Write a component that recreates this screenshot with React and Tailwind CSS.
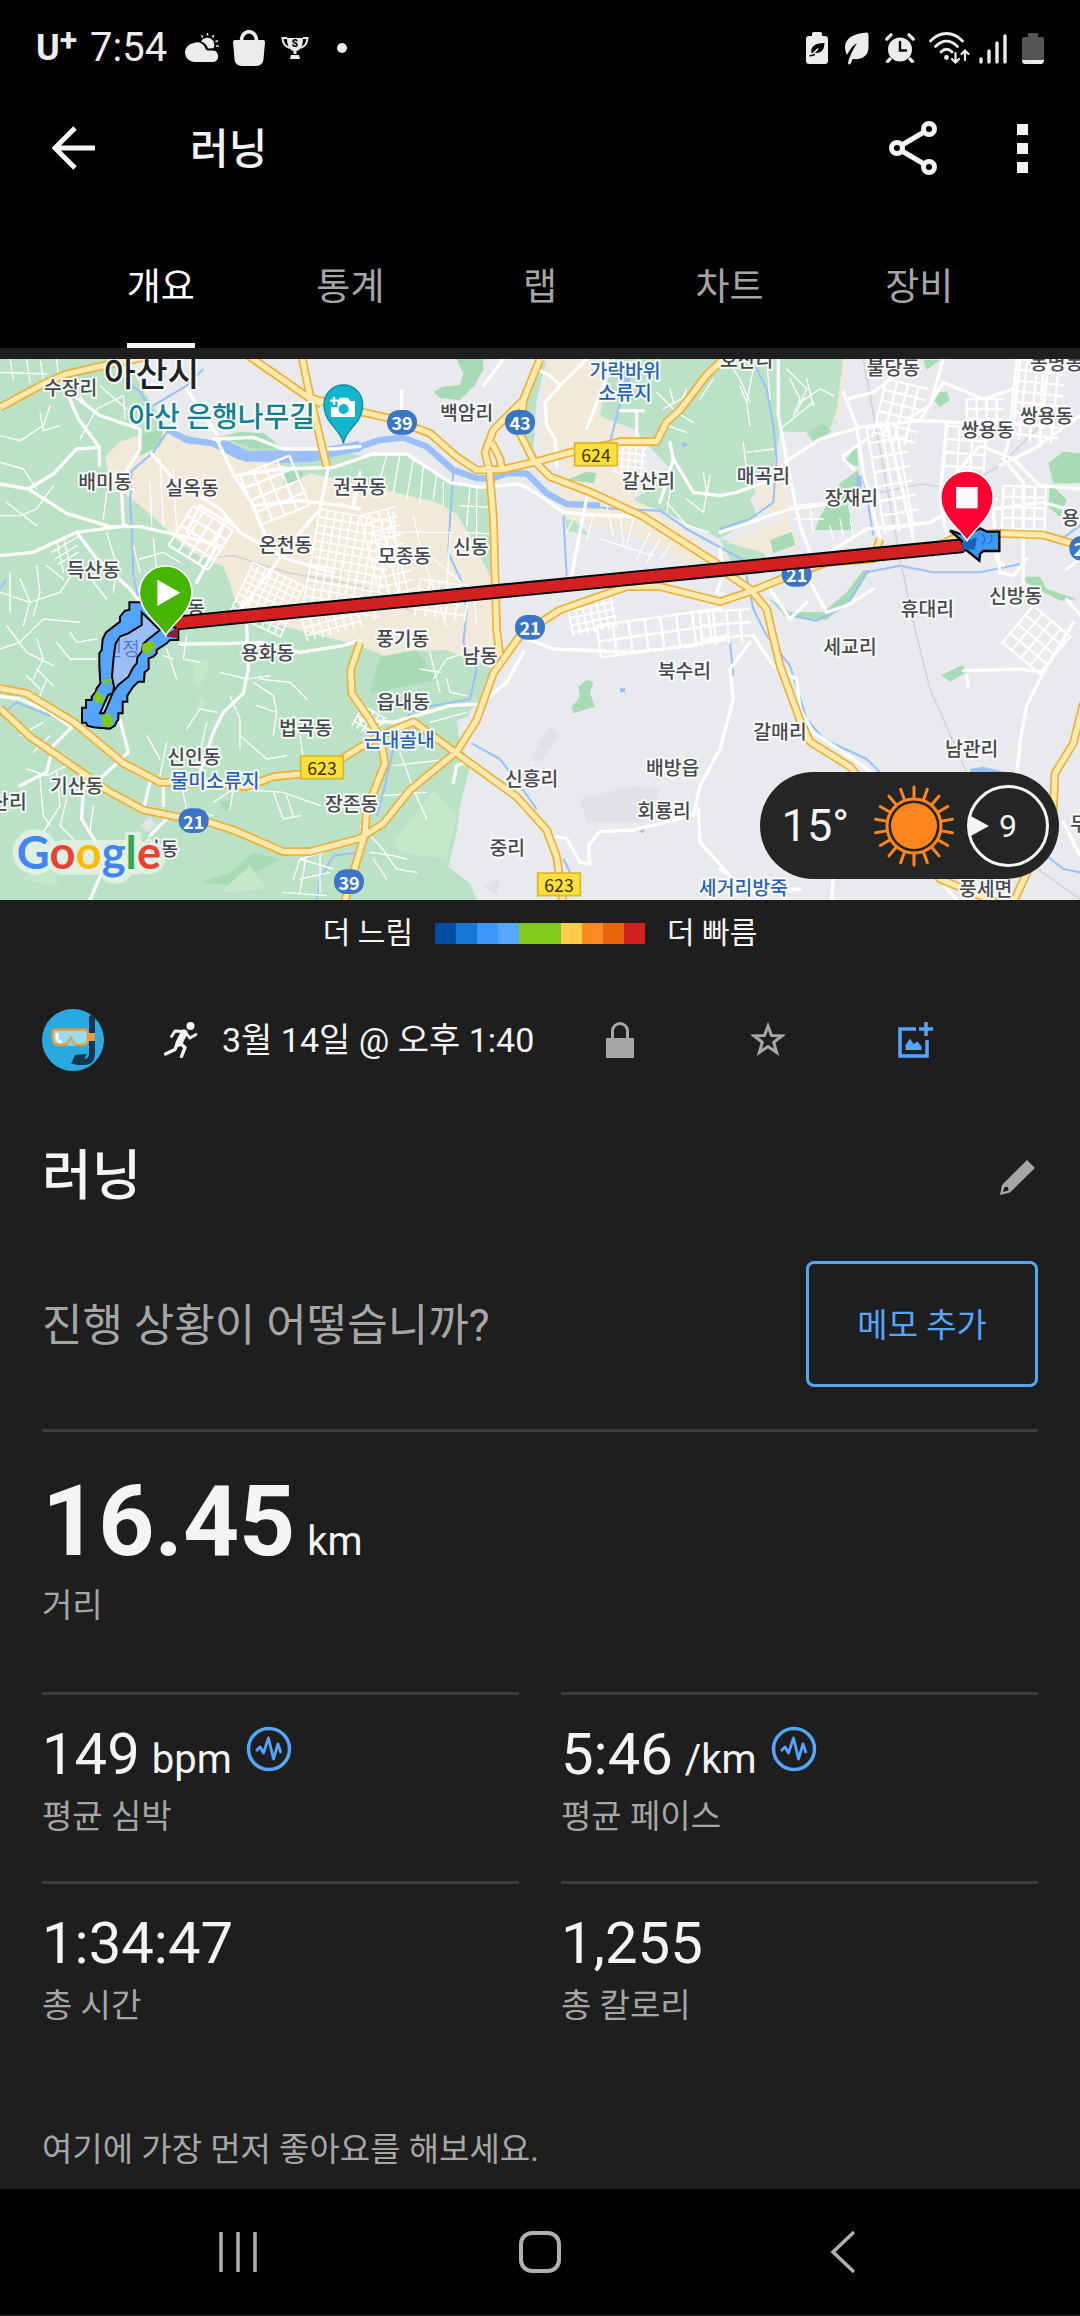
import React, { useState } from "react";

const tabs = ["개요", "통계", "랩", "차트", "장비"];

const speedColors = [
  "bg-[#004c9e]",
  "bg-[#1976d2]",
  "bg-[#3d97f5]",
  "bg-[#56a8ff]",
  "bg-[#82c91e]",
  "bg-[#82c91e]",
  "bg-[#fbcb4a]",
  "bg-[#fa8a24]",
  "bg-[#e8650a]",
  "bg-[#d32020]",
];

const stats = [
  { value: "149", unit: "bpm", label: "평균 심박", chart: true },
  { value: "5:46", unit: "/km", label: "평균 페이스", chart: true },
  { value: "1:34:47", label: "총 시간" },
  { value: "1,255", label: "총 칼로리" },
];

// map units are a third of a pixel at full width: 3240 x 1623
const places = [
  ["수장리", 212, 83],
  ["배미동", 315, 366],
  ["실옥동", 576, 385],
  ["온천동", 857, 556],
  ["득산동", 280, 629],
  ["방축동", 535, 743],
  ["권곡동", 1079, 381],
  ["백암리", 1400, 158],
  ["갈산리", 1945, 363],
  ["신동", 1412, 561],
  ["모종동", 1214, 588],
  ["호산리", 2240, 0],
  ["불당동", 2680, 25],
  ["봉명동", 3170, 8],
  ["쌍용동", 2963, 211],
  ["쌍용동", 3140, 168],
  ["매곡리", 2290, 348],
  ["장재리", 2554, 413],
  ["용곡동", 3265, 473],
  ["신방동", 3047, 708],
  ["휴대리", 2782, 748],
  ["용화동", 803, 878],
  ["법곡동", 917, 1105],
  ["신인동", 582, 1191],
  ["기산동", 230, 1278],
  ["오산리", 0, 1326],
  ["장존동", 1055, 1333],
  ["초사동", 455, 1468],
  ["풍기동", 1208, 838],
  ["남동", 1440, 888],
  ["읍내동", 1210, 1026],
  ["신흥리", 1595, 1258],
  ["중리", 1522, 1463],
  ["배방읍", 2018, 1223],
  ["회룡리", 1992, 1353],
  ["북수리", 2053, 933],
  ["세교리", 2550, 861],
  ["갈매리", 2340, 1116],
  ["남관리", 2915, 1168],
  ["풍세면", 2957, 1588],
  ["두남리", 3290, 1393],
];

const waterPlaces = [
  ["가락바위", 1875, 33],
  ["소류지", 1875, 100],
  ["물미소류지", 645, 1263],
  ["근대골내", 1198, 1141],
  ["세거리방죽", 2230, 1585],
];

const routes = [
  ["39", 1206, 190],
  ["43", 1560, 190],
  ["21", 1590, 805],
  ["21", 2390, 646],
  ["21", 581, 1385],
  ["39", 1047, 1568],
  ["21", 3253, 568],
];

const localRoutes = [
  ["624", 1788, 286],
  ["623", 966, 1225],
  ["623", 1677, 1576],
];

const highways = [
  "M0 145 130 75 200 45 310 20 430 -5",
  "M745 -10 925 115 965 135",
  "M905 -10 930 110 980 322",
  "M925 115 1080 158 1170 178 1290 223 1370 293 1430 333 1510 331 1610 308 1700 283 1830 256 1860 248 1970 248 2000 188 2040 153 2120 48 2170 0",
  "M1620 0 1570 123 1480 213 1455 280 1468 333 1480 473 1490 813 1500 890",
  "M1475 250 1500 300 1505 330",
  "M1570 123 1560 223 1600 303 1650 353 1780 403 1930 473 2150 613 2190 650 2250 690 2300 750 2340 920 2400 1083 2430 1148 2550 1223 2650 1350 2820 1560 2900 1593 3010 1640",
  "M1080 1438 1150 1393 1230 1293 1370 1178 1430 1083 1480 943 1560 830 1680 753 1880 683 1980 683 2160 728 2250 698 2350 658 2480 610 2620 600 2640 540",
  "M2780 580 2860 538 2990 523 3130 528 3240 560",
  "M0 1048 90 1133 250 1243 320 1293 430 1353 530 1373 620 1388 700 1413 850 1478 930 1478 1080 1438",
  "M0 988 80 1003 220 1088 370 1213 410 1233 480 1270 620 1273 740 1283 820 1253 960 1240 1080 1165 1140 1130 1240 1088 1370 1183 1550 1313 1640 1413 1670 1493 1690 1640",
  "M1080 850 1052 933 1055 1003 1110 1083 1140 1133 1155 1213 1100 1353 1095 1423 1060 1543 1030 1640",
  "M3250 1033 3220 1153 3165 1243 3160 1350 3080 1543 3035 1640",
];

const streets = [
  "M205 110 235 180 298 265 298 320",
  "M195 90 300 170 420 210 420 270 380 335",
  "M0 375 85 390 200 463 330 503 420 503 540 530 660 560",
  "M0 590 100 580 230 520 380 500",
  "M365 395 370 495",
  "M298 265 230 270 160 345 85 390",
  "M455 285 530 370 660 450 720 520 860 600 1000 640",
  "M650 240 700 345 760 440 800 540",
  "M640 240 760 235 850 270 1000 270 1080 262",
  "M700 350 840 330 1000 325 1120 285 1220 285 1350 370 1440 385 1560 375 1620 410 1690 460 1780 468 1920 473 2010 530",
  "M1760 210 1840 5",
  "M1910 160 1910 240M1860 155 1930 155",
  "M1765 390 1715 650",
  "M1450 80 1510 0",
  "M1610 30 1650 50 1680 80 1635 130 1640 200 1665 240 1670 320M1680 80 1760 0",
  "M1205 95 1205 150",
  "M560 90 650 225",
  "M985 325 960 450M1080 340 1060 440",
  "M760 440 900 425 1030 440 1080 450",
  "M560 520 600 440 700 500M640 560 680 480",
  "M700 780 900 520 960 450",
  "M590 670 650 560",
  "M230 520 290 600 390 690 420 730",
  "M540 855 700 853 780 850 900 880 1030 860 1080 845",
  "M740 800 745 930 730 1003 670 1060 640 1120 600 1240",
  "M360 1083 385 1180 300 1260 250 1290 245 1380 300 1470 310 1530 270 1623",
  "M0 1012 60 1020 150 1060 215 1105 160 1160 140 1240 60 1280",
  "M430 1353 450 1270M490 1273 490 1340M450 1430 500 1380",
  "M1080 1083 1180 1090 1350 1040 1440 1035 1520 970 1570 880",
  "M1360 1270 1370 1220 1400 1208",
  "M1660 1433 1700 1438 1740 1510 1770 1515 1765 1460 1800 1418 1900 1413 2080 1370 2100 1280 2160 1170 2200 1020 2190 930 2250 850",
  "M2095 1350 2100 1450 2190 1550",
  "M2260 830 2320 920 2390 960 2400 1050 2440 1120 2560 1200 2640 1260",
  "M2890 935 3060 930 3130 940M2900 950 2905 985",
  "M3220 790 3130 940 3080 1040 3060 1150 3050 1250",
  "M3190 1390 3240 1490M2160 1530 2260 1600 2400 1590M2500 1550 2495 1623",
  "M2800 1540 2870 1623",
  "M2160 410 2210 400 2290 370",
  "M2335 0 2335 170 2365 330 2400 500 2440 610",
  "M2355 310 2460 240 2580 205 2760 185 2880 190 3040 195 3120 200",
  "M2160 520 2370 450 2530 430",
  "M2530 100 2570 200 2590 340 2640 540",
  "M2540 120 2620 100 2700 40 2720 -10",
  "M2660 190 2700 360 2740 540M2720 180 2790 140 2830 0",
  "M2840 190 2830 300 2820 420 2840 530",
  "M2760 185 2830 70 2950 120 3040 90",
  "M2870 340 2940 260 3040 300 3120 380 3240 390",
  "M3060 0 3040 200 3010 300 3070 370 3070 700",
  "M3130 0 3120 260 3000 320",
  "M3240 170 3100 270",
  "M2990 560 3000 640 3040 650 3080 600",
  "M3010 620 2990 600 2980 450 3130 430 3200 450",
  "M2440 610 2600 510 2790 490 2860 450 2990 420",
  "M2530 290 2600 240M2560 330 2530 300",
  "M2180 710 2150 700 2170 650 2160 570M2420 650 2480 760 2540 740 2620 690",
  "M2310 690 2370 780 2420 730",
  "M1560 830 1660 870 1900 880 2080 860 2180 830",
  "M3250 780 3200 720M3200 630 3240 600",
  "M2010 250 2020 300 1980 430",
  "M2020 300 2080 400 2160 410",
];

const lanes = [
  "M0 40 140 45M30 0 40 60M80 0 90 70M120 0 130 60M170 0 175 50",
  "M0 230 60 245 130 200 150 140M120 160 130 215 180 200",
  "M0 310 70 330 110 390M160 380 110 450 60 470 0 470M110 500 20 430",
  "M155 580 240 530M165 600 230 560M175 615 235 580M170 545 190 640M190 535 215 640",
  "M60 660 90 730 70 800M110 620 120 700 100 770M30 640 30 760M140 620 190 660",
  "M240 240 290 150 370 110M370 110 375 180M240 110 260 140M300 80 380 150",
  "M310 480 320 400 400 390M450 370 455 500M480 300 490 500M520 330 530 520",
  "M420 600 490 580 540 610M400 560 420 640M460 540 470 640M250 630 320 720",
  "M0 700 90 730 180 700 220 640M320 520 350 620 340 700",
  "M0 870 60 850 130 780 240 790M20 800 80 880 160 920M100 960 130 900 110 840",
  "M140 960 120 1010M110 930 160 980M80 950 120 990",
  "M170 850 210 900 290 900M210 820 230 850 290 840",
  "M500 870 530 960M490 890 520 900M560 830 550 900 600 910",
  "M660 940 740 960 810 950M760 970 820 1010 830 1060M780 960 870 970 920 1020",
  "M650 1060 600 1050 560 1110M690 1010 720 1080 720 1170M620 1090 600 1180 520 1200",
  "M720 1130 800 1200 860 1190M820 1130 830 1060 770 1040M900 1130 910 1200",
  "M640 1330 700 1290 850 1300 960 1340M820 1300 850 1380 900 1370M860 1310 880 1370",
  "M700 1290 690 1350M540 1260 560 1350 640 1370M500 1150 480 1250M440 1130 480 1200",
  "M80 1230 140 1250 200 1220M60 1130 130 1090M100 1180 150 1130M120 1260 130 1370 150 1400",
  "M170 1240 180 1340 130 1420M200 1320 180 1400 220 1440M280 1340 270 1420",
  "M880 1560 900 1500 970 1480M900 1500 1000 1530M920 1480 900 1600M960 1470 960 1600M850 1600 980 1610M990 1540 900 1560",
  "M1110 1480 1180 1490 1220 1500M1080 1400 1140 1460 1190 1530 1250 1540M1120 1500 1160 1560",
  "M1290 880 1320 1000M1260 930 1320 940M1340 960 1350 1000 1400 1010M1300 960 1340 900 1400 880",
  "M1200 1180 1240 1290 1280 1380M1150 1310 1280 1300M1180 1220 1350 1200M1290 1090 1400 1060",
  "M1140 360 1160 290M1180 400 1200 285M1220 420 1240 300M1260 430 1270 320M1300 420 1310 350M1330 440 1330 370M1400 500 1410 380M1430 560 1430 380M1380 440 1480 445M1390 520 1480 525",
  "M1240 470 1270 600 1340 800M1180 460 1200 700M1120 520 1360 520M1350 520 1340 700M1300 600 1420 700 1430 790",
  "M2060 90 2040 140M1970 100 2030 160 2080 190M1990 150 2060 110M2010 90 2020 130M2000 200 2060 220",
  "M2100 120 2140 60M2130 350 2110 460 2060 420M2000 430 2060 500 2130 520M2020 340 2000 460M2110 340 2120 400",
  "M1820 440 1840 530M1860 470 1870 560M1900 480 1880 560M1780 470 1760 540M1720 480 1700 520M1800 540 1960 590M1950 520 1910 600M1980 540 1940 610M2010 560 1980 600",
  "M2220 80 2240 130 2250 200M2180 0 2220 60 2250 130M2260 30 2240 130M2300 0 2310 120M2360 30 2420 90 2390 160",
  "M2400 130 2460 90 2500 110M2420 60 2440 140M2340 210 2440 130M2380 170 2400 120 2370 60",
  "M2240 280 2320 270M2230 250 2240 340 2270 380M2250 330 2330 330",
  "M2370 440 2480 430M2380 480 2470 480M2430 440 2440 520",
  "M2490 500 2500 540M2520 480 2530 530M2550 480 2560 530",
];

const rivers = [
  "M505 213 560 243 640 253 720 293 850 303 940 298 1080 263 1140 243 1210 236 1280 263 1360 333 1430 358 1480 358 1520 343 1580 343 1640 403 1700 435 1800 440",
];

const streams = [
  "M505 213 460 160 420 100 370 60M460 140 560 80 610 30M505 213 460 280 395 335 390 430 395 500 400 650 420 740",
  "M1360 340 1350 480 1345 580 1390 680 1400 760 1390 850 1430 930 1410 1020 1300 1040 1230 1060 1180 1170 1150 1300 1130 1370",
  "M1700 435 1850 450 1980 455 2060 510 2170 570 2260 620",
  "M1690 470 1700 650",
  "M1860 0 1880 60 1830 250",
  "M2265 20 2300 90 2320 200 2330 300 2320 430 2250 480 2160 510",
  "M2590 350 2620 530",
  "M2240 650 2260 750 2300 830 2370 920 2420 1080 2470 1140 2600 1200 2640 1240",
  "M2350 765 2450 785 2540 740 2600 640 2700 620 2800 640 2940 640 3060 615",
  "M3240 500 3170 550",
  "M1415 1153 1500 1200 1560 1280 1610 1350",
  "M1690 1500 1710 1540",
  "M1000 1490 960 1560 950 1623M1000 1490 1080 1480",
  "M3140 1490 3190 1530 3240 1540",
  "M2190 850 2200 950",
  "M0 1070 50 1030 150 1070",
  "M0 690 20 660",
];

const rails = [
  "M2590 0 2640 270 2700 600 2745 810 2790 990 2900 1240 3100 1520 3240 1620",
  "M80 900 300 700 500 610 700 590 860 640 1080 680 1240 760",
  "M2640 400 2760 375 2880 390 3000 320 3120 200",
];

// a block of parallel streets in both directions
function Blocks({ x, y, w, h, step, angle, width = 7 }) {
  let d = "";
  for (let i = 0; i <= w; i += step) d += `M${i} 0V${h}`;
  for (let j = 0; j <= h; j += step) d += `M0 ${j}H${w}`;
  return (
    <path
      d={d}
      transform={`translate(${x} ${y}) rotate(${angle})`}
      stroke="#fff"
      strokeWidth={width}
      fill="none"
    />
  );
}

function MapLabel({ text, x, y, size = 58, color = "#45494e" }) {
  return (
    <text
      x={x}
      y={y}
      fontSize={size}
      fill={color}
      stroke="#fff"
      strokeOpacity="0.85"
      strokeWidth="12"
      strokeLinejoin="round"
      paintOrder="stroke"
      fontWeight="500"
      textAnchor="middle"
      dominantBaseline="central"
    >
      {text}
    </text>
  );
}

function RouteMap() {
  return (
    <svg
      viewBox="0 0 3240 1623"
      className="block w-full font-['Noto_Sans_CJK_KR',sans-serif]"
      role="img"
      aria-label="지도"
    >
      <rect width="3240" height="1623" fill="#e8eaed" />

      {/* woods and fields */}
      <g fill="#bbe2c6">
        <path d="M0 0H375L430 93 505 213 640 250 760 238 850 270 1000 270 1080 290 1220 285 1360 370 1480 385 1490 800 1480 930 1440 1033 1410 1053 1405 1073 1370 1083 1380 1153 1410 1223 1380 1343 1370 1423 1345 1523 1410 1573 1430 1623H0Z" />
        <path d="M1640 0 1610 120 1600 270 1640 350 1560 200 1590 60Z" />
        <path d="M1820 0 1800 173 1910 213 1930 243 2020 340 1900 423 2020 473 2160 540 2270 470 2250 420 2320 330 2340 218H2480L2510 193 2530 0Z" />
        <path d="M1690 453 1770 530 1700 515Z" />
        <path d="M2160 540 2300 570 2280 640 2200 620Z" />
      </g>

      {/* built-up land */}
      <g fill="#f1eada">
        <path d="M315 293 360 248 420 228 490 208 640 263 700 295 860 320 850 385 930 343 1080 375 1310 430 1370 465 1410 530 1430 575 1475 660 1485 930 1340 873 1210 878 1180 903 1080 860 800 790 740 773 700 713 690 673 670 623 600 593 530 543 460 473 400 423 330 373Z" />
        <path d="M1640 0H1830L1800 170 1920 230 1900 420 2010 480 2180 620 2060 610 1880 520 1700 480 1670 410 1700 340 1620 260Z" />
        <path d="M2530 0H2540L2520 170 2490 215 2510 150Z" />
        <path d="M2260 380 2350 300 2370 480 2280 450Z" />
        <path d="M2180 550 2360 480 2400 570 2300 585Z" />
      </g>

      <path
        fill="#e8eaed"
        d="M1480 385 1640 420 1690 470 1700 520 1880 560 1960 620 1490 670Z"
      />

      {/* parks */}
      <g fill="#a8dab5">
        <path d="M1370 0H1450L1450 33 1420 83 1380 123 1320 118 1300 98 1330 83 1380 78 1390 43Z" />
        <path d="M660 233 720 218 790 223 850 268 760 268Z" />
        <path d="M420 228 490 208 480 260 420 290Z" />
        <path d="M850 333 910 338 900 370 850 385Z" />
        <path d="M1700 363 1760 338 1790 343 1780 373Z" />
        <path d="M1140 893 1250 873 1310 963 1110 1003Z" />
        <path d="M1760 963 1780 968 1770 1003 1785 1043 1720 1063 1715 1043 1740 1013 1735 983Z" />
        <path d="M2420 223 2470 193 2495 218 2440 248Z" />
        <path d="M2530 313 2570 258 2575 323 2550 313Z" />
        <path d="M2460 473 2520 373 2575 333 2580 373 2540 423 2560 513 2445 513Z" />
        <path d="M2310 543 2375 518 2385 558 2320 583Z" />
        <path d="M2770 3H2820L2780 33ZM2805 98H2840L2850 123 2820 143 2800 123Z" />
        <path d="M3145 313 3190 278 3240 283V373H3160ZM3150 373 3200 423 3180 473 3145 443Z" />
        <path d="M2300 713 2360 773 2480 783 2560 713 2610 633 2590 633 2540 700 2470 760 2370 760Z" />
        <path d="M3070 653H3120L3140 690 3230 720 3180 725 3080 673Z" />
        <path d="M2823 948 2890 918 2895 943 2850 968Z" />
        <path d="M690 1543 760 1480 840 1500 700 1580 600 1570ZM660 1330 700 1320 680 1360Z" />
      </g>
      <g fill="#c5e8cb">
        <path d="M580 900 630 910 600 980 580 970ZM600 1010 620 1030 590 1060Z" />
        <path d="M1180 1450 1300 1290 1370 1370 1340 1500 1200 1480Z" />
        <path d="M660 1600 750 1520 800 1590ZM60 1560 150 1520 180 1580Z" />
      </g>
      <path
        fill="#e0e2e6"
        d="M1590 1200 1650 1100 1680 1130 1620 1210ZM1740 1320 1900 1280 1980 1290 1940 1390 1760 1390ZM1450 1580 1500 1560 1490 1610ZM420 1400 450 1370 470 1400 440 1420Z"
      />

      <g fill="none" stroke="#9bbff9" strokeLinejoin="round">
        {rivers.map((d) => (
          <path key={d} d={d} strokeWidth="19" />
        ))}
        <path d="M660 253 740 292 920 290 1080 262" strokeWidth="32" />
        {streams.map((d) => (
          <path key={d} d={d} strokeWidth="6" />
        ))}
      </g>
      <g fill="#9bbff9">
        <path d="M1870 30 1900 40 1880 90 1850 120ZM2045 250 2065 255 2050 268Z" />
        <path d="M2910 1230 2950 1223 3020 1240H2910ZM1200 1120 1215 1130 1195 1170Z" />
        <path d="M1860 988H1875V1000H1860ZM1915 1415 1935 1410 1930 1423ZM2570 350H2585V390H2570Z" />
      </g>

      <g fill="none" stroke="#d2d4d8" strokeWidth="5">
        {rails.map((d) => (
          <path key={d} d={d} />
        ))}
      </g>

      {/* small roads */}
      <g fill="none" stroke="#fff" strokeLinejoin="round" strokeLinecap="round">
        {lanes.map((d) => (
          <path key={d} d={d} strokeWidth="4" />
        ))}
        {streets.map((d) => (
          <path key={d} d={d} strokeWidth="10" />
        ))}
      </g>
      <Blocks x={960} y={450} w={230} h={300} step={24} angle={10} width={5} />
      <Blocks x={760} y={610} w={170} h={170} step={21} angle={25} width={5} />
      <Blocks x={580} y={440} w={140} h={140} step={35} angle={32} />
      <Blocks x={720} y={350} w={160} h={160} step={40} angle={-22} />
      <Blocks x={1080} y={470} w={110} h={280} step={28} angle={-14} width={5} />
      <Blocks x={900} y={760} w={170} h={90} step={24} angle={-15} width={5} />
      <Blocks x={1260} y={660} w={150} h={110} step={30} angle={8} width={5} />
      <Blocks x={1090} y={1040} w={80} h={70} step={18} angle={30} width={5} />
      <Blocks x={1850} y={260} w={90} h={80} step={20} angle={5} width={5} />
      <Blocks x={1700} y={735} w={140} h={100} step={22} angle={-12} width={6} />
      <Blocks x={1790} y={800} w={380} h={100} step={48} angle={-8} />
      <Blocks x={2100} y={760} w={150} h={100} step={40} angle={-4} />
      <Blocks x={2600} y={210} w={110} h={320} step={44} angle={-10} />
      <Blocks x={2660} y={60} w={130} h={180} step={33} angle={14} />
      <Blocks x={2840} y={200} w={120} h={130} step={40} angle={4} />
      <Blocks x={3050} y={0} w={150} h={240} step={32} angle={6} />
      <Blocks x={2900} y={120} w={110} h={70} step={30} angle={0} />
      <Blocks x={3010} y={380} w={130} h={150} step={32} angle={2} />
      <Blocks x={3100} y={740} w={150} h={150} step={36} angle={40} />

      {/* main roads: darker casing under a light fill */}
      <g fill="none" strokeLinejoin="round">
        {highways.map((d) => (
          <path key={d} d={d} stroke="#efb035" strokeWidth="26" />
        ))}
        {highways.map((d) => (
          <path key={d} d={d} stroke="#ffe9ae" strokeWidth="16" />
        ))}
      </g>

      {places.map(([text, x, y]) => (
        <MapLabel key={`${text}${x}`} text={text} x={x} y={y} />
      ))}
      {waterPlaces.map(([text, x, y]) => (
        <MapLabel key={text} text={text} x={x} y={y} color="#2763b5" />
      ))}
      <MapLabel text="아산시" x={455} y={36} size={104} color="#202124" />
      <MapLabel
        text="아산 은행나무길"
        x={665}
        y={168}
        size={84}
        color="#12808e"
      />

      {/* sight pin */}
      <path
        d="M1030 253C1020 205 972 195 972 136A58 58 0 0 1 1088 136C1088 195 1040 205 1030 253Z"
        fill="#12b5cb"
        stroke="#0b8f9f"
        strokeWidth="4"
      />
      <path
        d="M1013 126 1020 116H1044L1051 126H1065V174H993V145H1013Z"
        fill="#fff"
      />
      <path d="M1002 113V137M990 125H1014" stroke="#fff" strokeWidth="7" />
      <circle cx="1031" cy="150" r="15" fill="#12b5cb" />

      {routes.map(([text, x, y]) => (
        <g key={`${text}${x}`}>
          <rect
            x={x - 45}
            y={y - 37}
            width="90"
            height="74"
            rx="36"
            fill="#3b76c6"
          />
          <text
            x={x}
            y={y}
            fill="#fff"
            fontSize="54"
            fontWeight="700"
            textAnchor="middle"
            dominantBaseline="central"
          >
            {text}
          </text>
        </g>
      ))}
      {localRoutes.map(([text, x, y]) => (
        <g key={`${text}${x}`}>
          <rect
            x={x - 64}
            y={y - 34}
            width="128"
            height="68"
            fill="#ffdf3a"
            stroke="#d8b52c"
            strokeWidth="5"
          />
          <text
            x={x}
            y={y}
            fill="#3b3200"
            fontSize="53"
            textAnchor="middle"
            dominantBaseline="central"
          >
            {text}
          </text>
        </g>
      ))}

      {/* lake inside the track */}
      <path
        fill="#9bbff9"
        d="M425 745V798L385 823 347 853 336 953 340 998 400 925 425 878 442 843 500 813 460 770Z"
      />
      <text
        x="366"
        y="867"
        fontSize="58"
        fill="#4f7dce"
        textAnchor="middle"
        dominantBaseline="central"
      >
        신정
      </text>

      {/* pale halo under the logo */}
      <g fill="#e3f2e4" fillOpacity="0.9">
        <circle cx="106" cy="1479" r="68" />
        <rect x="140" y="1443" width="310" height="104" rx="50" />
        <circle cx="346" cy="1518" r="56" />
        <rect x="374" y="1418" width="50" height="110" rx="12" />
        <circle cx="446" cy="1496" r="50" />
      </g>
      <text
        x="50"
        y="1529"
        fontSize="136"
        fontWeight="700"
        className="font-[Lato,sans-serif]"
      >
        <tspan fill="#4285f4">G</tspan>
        <tspan fill="#ea4335">o</tspan>
        <tspan fill="#fbbc05">o</tspan>
        <tspan fill="#4285f4">g</tspan>
        <tspan fill="#34a853">l</tspan>
        <tspan fill="#ea4335">e</tspan>
      </text>

      {/* recorded track */}
      <path
        d="M500 795 2890 560"
        stroke="#000"
        strokeWidth="44"
        fill="none"
      />
      <path
        d="M500 795 2890 560"
        stroke="#d32020"
        strokeWidth="33"
        fill="none"
      />
      <path
        fill="#54a5ff"
        fillRule="evenodd"
        stroke="#000"
        strokeWidth="6"
        d="M430 730H388V753L375 755 360 773V788L330 811 318 820 308 840 305 873 298 883V920L301 973 290 988 286 1000 275 1013V1023H258V1046H246V1091H258L262 1100 280 1105 330 1109 345 1100 350 1088 355 1082V1063H368V1028H382V1010L390 998 398 985 410 973 415 968H432L434 940 446 930V898L460 893 470 883V873L500 853 510 843H535V813L500 790ZM425 760V798L385 823 360 833 347 853 341 893 336 953 342 983 340 998 355 978 385 953 400 925 410 913 412 895 425 878 430 855 442 843 480 813ZM300 1063 310 1040 325 1008 338 1002 320 1045 312 1063Z"
      />
      <g fill="#82c91e">
        <path d="M290 995 315 1015 308 1030 288 1032 280 1015Z" />
        <path d="M305 1070 325 1062 342 1080 335 1102 310 1104Z" />
        <path d="M428 855 455 845 468 862 445 888 425 875Z" />
        <path d="M308 965 335 958 334 968 312 974Z" />
      </g>
      <path
        fill="#3d97f5"
        stroke="#000"
        strokeWidth="7"
        d="M2850 515 2900 530 2940 508 2960 518H2998V576H2950L2940 585 2938 605 2900 574H2895L2885 545Z"
      />
      <path d="M2885 550 2930 535 2925 572 2890 572Z" fill="#1766b8" />
      <path
        d="M2945 525Q2965 540 2945 555M2970 525Q2985 540 2965 555"
        stroke="#1976d2"
        strokeWidth="4"
        fill="none"
      />
      <path d="M490 830 535 805 533 838Z" fill="#8d2030" />

      <path
        d="M497 830C480 795 418 760 418 700A79 79 0 0 1 576 700C576 760 514 795 497 830Z"
        fill="#45b500"
        stroke="#fff"
        strokeWidth="5"
      />
      <path d="M472 662 541 701 472 741Z" fill="#fff" />
      <path
        d="M2901 545C2880 510 2822 475 2822 415A79 79 0 0 1 2980 415C2980 475 2922 510 2901 545Z"
        fill="#ff0032"
        stroke="#fff"
        strokeWidth="5"
      />
      <rect x="2868" y="384" width="65" height="64" fill="#fafafa" />
    </svg>
  );
}

function SunIcon() {
  const rays = Array.from({ length: 18 }, (_, i) => i * 20);
  return (
    <svg viewBox="0 0 82 82" className="size-[82px]" fill="none">
      <circle cx="41" cy="41" r="23" fill="#ff861e" />
      <circle cx="41" cy="41" r="27" stroke="#ff861e" strokeWidth="3" />
      {rays.map((a) => (
        <path
          key={a}
          d="M41 13V2"
          stroke="#ff861e"
          strokeWidth="3"
          strokeLinecap="round"
          transform={`rotate(${a} 41 41)`}
        />
      ))}
    </svg>
  );
}

function Weather() {
  return (
    <div className="absolute right-[21px] bottom-[21px] flex h-[107px] items-center rounded-full bg-[#252525] pr-[10px] pl-[22px] text-[#f4f4f4]">
      <span className="text-[45px]">15°</span>
      <span className="ml-6">
        <SunIcon />
      </span>
      <div className="relative ml-3 flex size-[82px] items-center justify-center rounded-full border-3 border-[#f4f4f4]">
        <svg
          viewBox="0 0 20 22"
          className="absolute -left-px h-[22px] w-5"
          fill="#f4f4f4"
        >
          <path d="M0 0 20 11 0 22Z" />
        </svg>
        <span className="text-[32px]">9</span>
      </div>
    </div>
  );
}

function StatusBar() {
  return (
    <div className="flex items-center justify-between py-6 pr-9 pl-9 text-[#ececec]">
      <div className="flex items-center">
        <span className="flex w-[54px] items-start font-bold">
          <span className="text-[36px] leading-[48px]">U</span>
          <span className="text-[32px] leading-[32px]">+</span>
        </span>
        <span className="text-[40px] leading-[48px]">7:54</span>
        <svg
          viewBox="0 0 34 30"
          className="ml-[18px] h-[30px] w-[34px]"
          fill="currentColor"
        >
          <path d="M10 29A9.500 9.500 0 0 1 9 10C13 8 19 10 20.500 16 22 18 23 17.500 28 17.500A5.800 5.800 0 0 1 28 29Z" />
          <path d="M16 8.500A7 7 0 1 1 28.500 15.200L23 15.500C21.500 11.500 19.500 9.500 16 8.500Z" />
          <path
            d="M22.500 0V2.500M16.500 2.200 17.800 4.500M28.800 2.200 27.500 4.500M33 7.500 30.500 8.800M33.800 13H31"
            stroke="currentColor"
            strokeWidth="1.500"
          />
        </svg>
        <svg
          viewBox="0 0 32 36"
          className="ml-[14px] h-9 w-8"
          fill="currentColor"
        >
          <path d="M2 10H30Q32 10 32 12L30.500 29Q30 36 23 36H9Q2 36 1.500 29L0 12Q0 10 2 10Z" />
          <path
            d="M8.500 11C8.500-1.500 23.500-1.500 23.500 11"
            fill="none"
            stroke="currentColor"
            strokeWidth="3.500"
          />
        </svg>
        <svg viewBox="0 0 28 24" className="ml-4 h-6 w-7">
          <path
            d="M6 2H22C22 9 20 14 15.500 15V18H12.500V15C8 14 6 9 6 2ZM10 19H18L19 23H9Z"
            fill="currentColor"
          />
          <path
            d="M6 2H1.500Q2 10 8.500 12M22 2H26.500Q26 10 19.500 12"
            stroke="currentColor"
            strokeWidth="2"
            fill="none"
          />
          <text
            x="14"
            y="11"
            fontSize="10"
            fontWeight="900"
            textAnchor="middle"
            fill="#000"
          >
            S
          </text>
        </svg>
        <span className="ml-[28px] size-[10px] rounded-full bg-[#ececec]" />
      </div>

      <div className="flex items-center">
        <svg viewBox="0 0 22 32" className="h-8 w-[22px]">
          <path
            d="M6 1.500Q6 0 8 0H14Q16 0 16 1.500V4H19Q22 4 22 7V29Q22 32 19 32H3Q0 32 0 29V7Q0 4 3 4H6Z"
            fill="currentColor"
          />
          <path
            d="M18.500 11C10 11 4 14 5.500 21 12 21 18 22 18.500 11Z"
            fill="#000"
          />
          <path
            d="M3.500 24C7 23 9 20 12 16.500"
            stroke="#ececec"
            strokeWidth="1.500"
            fill="none"
          />
          <path d="M3.500 24 9 22.500" stroke="#000" strokeWidth="1.500" />
        </svg>
        <svg viewBox="0 0 24 33" className="ml-[17px] h-[33px] w-6">
          <path
            d="M22 .5C10 1 0 6 0 15 0 18 1 21 2 23 4 19 8 13 12 11 9 16 6 21 4 27L3 31Q4 34 6 31L7.500 27C17 28 23 24 23.500 16V3Q23.500 1 22 .5Z"
            fill="currentColor"
          />
        </svg>
        <svg
          viewBox="0 0 30 30"
          className="ml-4 size-[30px]"
          stroke="currentColor"
          strokeLinecap="round"
        >
          <circle cx="15" cy="16.500" r="12" fill="currentColor" stroke="none" />
          <path
            d="M1.800 6 6 1.800M28.200 6 24 1.800M5 26 2.500 28.500M25 26 27.500 28.500"
            strokeWidth="3.200"
          />
          <path d="M15 9V17.500H21" stroke="#000" strokeWidth="2.400" fill="none" />
        </svg>
        <svg
          viewBox="0 0 42 32"
          className="ml-[14px] h-8 w-[42px]"
          stroke="currentColor"
          strokeWidth="2.800"
          strokeLinecap="round"
          fill="none"
        >
          <path d="M1.500 9C11-1 24-1 33.500 9M6.500 14.500C13.500 7.500 21.500 7.500 28.500 14.500M12 20C15.500 16.500 19.500 16.500 23 20" />
          <circle cx="17.500" cy="25.500" r="1" fill="currentColor" />
          <path
            d="M26.500 21V30M23 27 26.500 30.500 30 27M36 28V18.500M32.500 22 36 18.500 39.500 22"
            strokeWidth="2.200"
          />
        </svg>
        <svg
          viewBox="0 0 28 31"
          className="ml-2 h-[31px] w-7"
          stroke="currentColor"
          strokeWidth="3.400"
          strokeLinecap="round"
        >
          <path d="M2 26V29M10 18V29M18 10V29M26 3V29" />
        </svg>
        <svg viewBox="0 0 22 31" className="ml-[15px] h-[31px] w-[22px]">
          <path
            d="M6 1Q6 0 7 0H15Q16 0 16 1V4H20Q22 4 22 6V27H0V6Q0 4 2 4H6Z"
            fill="#555"
          />
          <path d="M0 27H22Q22 31 19 31H3Q0 31 0 27Z" fill="currentColor" />
        </svg>
      </div>
    </div>
  );
}

function AppBar() {
  return (
    <div className="flex items-center py-[25px] pr-[52px] pl-[52px] text-[#f4f4f4]">
      <button type="button" aria-label="뒤로">
        <svg
          viewBox="0 0 44 44"
          className="size-11"
          fill="none"
          stroke="currentColor"
          strokeWidth="5"
        >
          <path d="M43 22H5M23 2 3 22 23 42" />
        </svg>
      </button>
      <h1 className="ml-[94px] flex-1 pt-1 text-[42px] leading-[48px] font-medium">
        러닝
      </h1>
      <button type="button" aria-label="공유">
        <svg
          viewBox="0 0 48 54"
          className="h-[54px] w-12"
          fill="none"
          stroke="currentColor"
          strokeWidth="5"
        >
          <circle cx="8" cy="27" r="5.500" />
          <circle cx="40" cy="8" r="5.500" />
          <circle cx="40" cy="46" r="5.500" />
          <path d="M13 24 35 11M13 30 35 43" />
        </svg>
      </button>
      <button
        type="button"
        aria-label="더보기"
        className="ml-20 flex flex-col gap-2"
      >
        <span className="size-[11px] bg-[#f4f4f4]" />
        <span className="size-[11px] bg-[#f4f4f4]" />
        <span className="size-[11px] bg-[#f4f4f4]" />
      </button>
    </div>
  );
}

function Avatar() {
  return (
    <svg viewBox="0 0 62 62" className="size-[62px]" fill="none">
      <circle cx="31" cy="31" r="31" fill="#29abe2" />
      <path
        d="M50 9V44Q50 53 42 53H35"
        stroke="#12364f"
        strokeWidth="6"
        strokeLinecap="round"
      />
      <path d="M29 55 33 46 45 45 40 54Z" fill="#12364f" />
      <path d="M45 24H53V32H45Z" fill="#e8973a" />
      <path
        d="M13 20.500H42Q46 20.500 46 24V31Q46 36 40 36H35Q32 36 31 33L29 29 26 33Q25 36 20 36H17Q10.500 36 10.500 29V24Q10.500 20.500 13 20.500Z"
        fill="#9bdcec"
        stroke="#e8973a"
        strokeWidth="2.500"
      />
      <path d="M15 24V29Q16 33 20 33" stroke="#fff" strokeWidth="3" />
      <path d="M29 29 25 37H33Z" fill="#7fd0e8" />
    </svg>
  );
}

function RunnerIcon() {
  return (
    <svg
      viewBox="0 0 34 36"
      className="h-9 w-[34px]"
      fill="none"
      stroke="#f4f4f4"
      strokeLinejoin="round"
      strokeLinecap="round"
    >
      <circle cx="26.500" cy="4" r="4" fill="#f4f4f4" stroke="none" />
      <path d="M20 11 15 21" strokeWidth="7" />
      <path
        d="M19 9.500 11 9 7.500 14.500M22.500 12 26 16 32 12.500"
        strokeWidth="2.800"
      />
      <path
        d="M16 21 21 25.500 17.500 34.500M13.500 21 11 27.500 1.500 32"
        strokeWidth="3.400"
      />
    </svg>
  );
}

function ActivityRow() {
  return (
    <div className="mt-[43px] flex items-center">
      <Avatar />
      <span className="ml-[60px]">
        <RunnerIcon />
      </span>
      <span className="ml-6 flex-1 text-[34px] leading-[44px] text-[#f4f4f4]">
        3월 14일 @ 오후 1:40
      </span>
      <div className="mr-12 flex">
        <button
          type="button"
          aria-label="비공개"
          className="flex w-[148px] justify-center"
        >
          <svg viewBox="0 0 28 36" className="h-9 w-7">
            <path d="M0 16H28V36H0Z" fill="#a6a6a6" />
            <path
              d="M6.500 17V9A7.500 7.500 0 0 1 21.500 9V17"
              fill="none"
              stroke="#a6a6a6"
              strokeWidth="3"
            />
          </svg>
        </button>
        <button
          type="button"
          aria-label="즐겨찾기"
          className="flex w-[148px] justify-center"
        >
          <svg
            viewBox="0 0 34 34"
            className="size-[34px]"
            fill="none"
            stroke="#a6a6a6"
            strokeWidth="3"
          >
            <path d="M17 4 20.500 13.500 31 13.800 22.700 20.200 25.700 30.500 17 24.500 8.300 30.500 11.300 20.200 3 13.800 13.500 13.500Z" />
          </svg>
        </button>
        <button
          type="button"
          aria-label="사진 추가"
          className="flex w-[148px] justify-center"
        >
          <svg viewBox="0 0 36 36" className="size-9" fill="none">
            <path d="M18 7H2V34H29V18" stroke="#54a5ff" strokeWidth="3.500" />
            <path d="M28 0V14M21 7H35" stroke="#54a5ff" strokeWidth="3.500" />
            <path
              d="M7.500 28V23L12 16.500 15.500 22 19.500 19.500 23.500 24.500V28Z"
              fill="#54a5ff"
            />
          </svg>
        </button>
      </div>
    </div>
  );
}

function ChartBadge() {
  return (
    <button type="button" aria-label="차트 보기" className="mb-5 ml-[14px]">
      <svg
        viewBox="0 0 46 46"
        className="size-[46px]"
        fill="none"
        stroke="#54a5ff"
      >
        <circle cx="23" cy="23" r="20.500" strokeWidth="3.500" />
        <path
          d="M10 25 14 21 17.500 27 22.500 12 27.500 33 32 18 35 27"
          strokeWidth="2.800"
          strokeLinejoin="round"
        />
      </svg>
    </button>
  );
}

function Stat({ value, unit, label, chart }) {
  return (
    <div className="border-t-3 border-[#3d3d3d] pt-[21px] pb-[45px]">
      <div className="flex h-[76px] items-end text-[#f4f4f4]">
        <span className="text-[58px] leading-[76px]">{value}</span>
        {unit && (
          <span className="ml-3 text-[40px] leading-[64px]">{unit}</span>
        )}
        {chart && <ChartBadge />}
      </div>
      <div className="mt-[6px] text-[33px] leading-[38px] text-[#a6a6a6]">
        {label}
      </div>
    </div>
  );
}

function NavBar() {
  return (
    <nav className="grid grid-cols-[1fr_auto_1fr] items-center bg-black px-[217px] py-10 text-[#b0b0b0]">
      <button type="button" aria-label="최근 앱" className="justify-self-start">
        <svg
          viewBox="0 0 42 46"
          className="h-[46px] w-[42px]"
          stroke="currentColor"
          strokeWidth="3.500"
        >
          <path d="M4 3V43M21 3V43M38 3V43" />
        </svg>
      </button>
      <button type="button" aria-label="홈">
        <svg
          viewBox="0 0 46 46"
          className="size-[46px]"
          fill="none"
          stroke="currentColor"
          strokeWidth="4"
        >
          <rect x="4" y="4" width="38" height="38" rx="11" />
        </svg>
      </button>
      <button type="button" aria-label="뒤로" className="justify-self-end">
        <svg
          viewBox="0 0 42 46"
          className="h-[46px] w-[42px]"
          fill="none"
          stroke="currentColor"
          strokeWidth="3.500"
        >
          <path d="M33 3 12 23 33 43" />
        </svg>
      </button>
    </nav>
  );
}

function App() {
  const [active, setActive] = useState(0);

  return (
    <div className="min-h-screen bg-[#1e1e1e] font-['Roboto','Noto_Sans_CJK_KR',sans-serif]">
      <header className="bg-black">
        <StatusBar />
        <AppBar />
        <div role="tablist" className="grid grid-cols-5 px-[66px]">
          {tabs.map((tab, i) => (
            <button
              key={tab}
              type="button"
              role="tab"
              aria-selected={i === active}
              onClick={() => setActive(i)}
              className={`justify-self-center border-b-5 pt-[66px] pb-[33px] text-[37px] leading-[44px] ${
                i === active
                  ? "border-[#f4f4f4] text-white"
                  : "border-transparent text-[#a6a6a6]"
              }`}
            >
              {tab}
            </button>
          ))}
        </div>
      </header>

      <div className="relative mt-[11px]">
        <RouteMap />
        <Weather />
      </div>

      <div className="flex items-center justify-center gap-[22px] py-4 text-[30px] leading-[34px] text-[#f4f4f4]">
        <span>더 느림</span>
        <div className="flex">
          {speedColors.map((color, i) => (
            <span key={i} className={`h-[21px] w-[21px] ${color}`} />
          ))}
        </div>
        <span>더 빠름</span>
      </div>

      <main className="px-[42px]">
        <ActivityRow />

        <div className="mt-[74px] flex items-center justify-between">
          <h2 className="text-[54px] leading-[64px] font-medium text-[#f4f4f4]">
            러닝
          </h2>
          <button type="button" aria-label="편집" className="mr-[2px]">
            <svg viewBox="0 0 36 36" className="size-9" fill="#a6a6a6">
              <path
                d="M0 36 2 26 27 1 35 9 10 33.500ZM4.500 28 3 33 8.500 31.500 8 28Z"
                fillRule="evenodd"
              />
            </svg>
          </button>
        </div>

        <div className="mt-[52px] flex items-center justify-between">
          <p className="pt-1 text-[44px] leading-[56px] text-[#a6a6a6]">
            진행 상황이 어떻습니까?
          </p>
          <button
            type="button"
            className="rounded-lg border-3 border-[#54a5f5] px-12 pt-10 pb-9 text-[33px] leading-[44px] text-[#54a5ff]"
          >
            메모 추가
          </button>
        </div>

        <section className="mt-[42px] border-t-3 border-[#3d3d3d] pt-8 pb-[67px]">
          <div className="flex items-baseline text-[#f4f4f4]">
            <span className="text-[98px] leading-[116px] font-bold">16.45</span>
            <span className="ml-3 text-[40px]">km</span>
          </div>
          <div className="mt-[7px] text-[33px] leading-[38px] text-[#a6a6a6]">
            거리
          </div>
        </section>

        <section className="grid grid-cols-2 gap-x-[42px]">
          {stats.map((stat) => (
            <Stat key={stat.label} {...stat} />
          ))}
        </section>

        <p className="mt-[59px] pb-[18px] text-[33px] leading-[42px] text-[#a6a6a6]">
          여기에 가장 먼저 좋아요를 해보세요.
        </p>
      </main>

      <NavBar />
    </div>
  );
}

export default App;
